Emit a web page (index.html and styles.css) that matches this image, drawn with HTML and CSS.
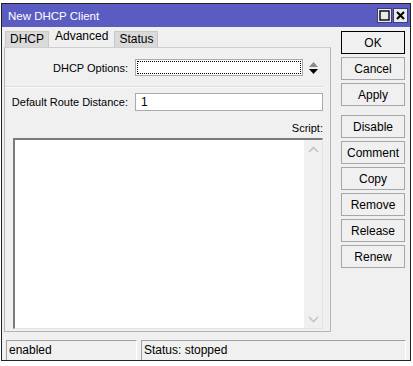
FILE: index.html
```html
<!DOCTYPE html>
<html lang="en">
<head>
    <meta charset="UTF-8">
    <title>New DHCP Client</title>
    <link rel="stylesheet" href="styles.css">
</head>
<body>
    <div class="window">
        <div class="titlebar">
            <span class="title">New DHCP Client</span>
            <div class="title-buttons">
                <span class="tbtn">
                    <svg width="11" height="11" viewBox="0 0 11 11"><rect x="1" y="1" width="9" height="9" fill="none" stroke="#000" stroke-width="1.4"/></svg>
                </span>
                <span class="tbtn">
                    <svg width="11" height="11" viewBox="0 0 11 11"><path d="M2 2 L9 9 M9 2 L2 9" stroke="#000" stroke-width="2"/></svg>
                </span>
            </div>
        </div>

        <div class="main">
            <div class="left">
                <div class="tabs">
                    <div class="tab">DHCP</div>
                    <div class="tab active">Advanced</div>
                    <div class="tab">Status</div>
                </div>
                <div class="panel">
                    <div class="row row-options">
                        <label class="label">DHCP Options:</label>
                        <div class="select"><div class="focus"></div></div>
                        <svg class="updown" width="11" height="16" viewBox="0 0 11 16">
                            <path d="M5.5 2 L10 7 L1 7 Z" fill="#8a8a8a"/>
                            <path d="M1 9 L10 9 L5.5 14 Z" fill="#000"/>
                        </svg>
                    </div>
                    <div class="separator"></div>
                    <div class="row row-distance">
                        <label class="label">Default Route Distance:</label>
                        <div class="input">1</div>
                    </div>
                    <div class="script-label">Script:</div>
                    <div class="textarea">
                        <div class="vscroll">
                            <svg width="11" height="7" viewBox="0 0 11 7"><path d="M1 6 L5.5 1.5 L10 6" fill="none" stroke="#c4c4c4" stroke-width="1.6"/></svg>
                            <svg width="11" height="7" viewBox="0 0 11 7"><path d="M1 1 L5.5 5.5 L10 1" fill="none" stroke="#c4c4c4" stroke-width="1.6"/></svg>
                        </div>
                    </div>
                </div>
            </div>

            <div class="buttons">
                <button class="btn default">OK</button>
                <button class="btn">Cancel</button>
                <button class="btn">Apply</button>
                <button class="btn spaced">Disable</button>
                <button class="btn">Comment</button>
                <button class="btn">Copy</button>
                <button class="btn">Remove</button>
                <button class="btn">Release</button>
                <button class="btn">Renew</button>
            </div>
        </div>

        <div class="statusbar">
            <div class="cell cell-state">enabled</div>
            <div class="cell cell-status">Status: stopped</div>
        </div>
    </div>
</body>
</html>
```

FILE: styles.css
```css
* {
    box-sizing: border-box;
}
body, html {
    margin: 0;
    padding: 0;
    background-color: #fff;
    font-family: 'Liberation Sans', Arial, sans-serif;
    font-size: 12px;
    color: #000;
}
.window {
    width: 410px;
    height: 358px;
    margin: 3px 0 0 1px;
    border: 1px solid #222;
    background-color: #f0f0f0;
    display: flex;
    flex-direction: column;
}
.titlebar {
    flex-shrink: 0;
    height: 23px;
    background-color: #5a5cc2;
    color: #fff;
    display: flex;
    align-items: center;
    justify-content: space-between;
    padding: 0 2px 0 6px;
}
.title {
    font-size: 11.5px;
}
.title-buttons {
    display: flex;
    gap: 1px;
}
.tbtn {
    width: 15px;
    height: 15px;
    background-color: #eaeaea;
    border: 1px solid #3d3d7a;
    display: flex;
    align-items: center;
    justify-content: center;
}
.main {
    flex-shrink: 0;
    height: 305px;
    display: flex;
    padding: 2px 5px 0 2px;
}
.left {
    width: 327px;
    display: flex;
    flex-direction: column;
}
.tabs {
    display: flex;
    height: 18px;
    align-items: flex-end;
    padding-left: 1px;
}
.tab {
    height: 16px;
    line-height: 15px;
    padding: 0 4px;
    background-color: #dadada;
    border: 1px solid #c8c8c8;
    border-bottom: none;
}
.tab.active {
    height: 18px;
    line-height: 13px;
    background-color: #f0f0f0;
    border-color: #f0f0f0;
    padding: 0 5px;
}
.panel {
    height: 285px;
    border: 1px solid #b4b4b4;
    border-top-color: #cfcfcf;
    display: flex;
    flex-direction: column;
    padding: 0 7px 0 0;
}
.row {
    display: flex;
    align-items: center;
}
.row-options {
    margin-top: 11px;
    height: 17px;
}
.label {
    width: 130px;
    flex-shrink: 0;
    text-align: right;
    padding-right: 7px;
    white-space: nowrap;
    font-size: 11px;
}
.select {
    width: 168px;
    height: 17px;
    background-color: #fff;
    border: 1px solid #a9a9a9;
    padding: 1px;
}
.focus {
    height: 100%;
    border: 1px dotted #000;
}
.updown {
    margin-left: 5px;
}
.separator {
    margin-top: 10px;
    height: 2px;
    border-top: 1px solid #dddddd;
    border-bottom: 1px solid #fafafa;
}
.row-distance {
    margin-top: 5px;
    height: 18px;
}
.input {
    flex: 1;
    height: 18px;
    line-height: 16px;
    background-color: #fff;
    border: 1px solid #a9a9a9;
    padding-left: 5px;
}
.script-label {
    margin-top: 10px;
    text-align: right;
    height: 14px;
    line-height: 14px;
    font-size: 11px;
}
.textarea {
    margin: 3px 0 0 8px;
    height: 191px;
    background-color: #fff;
    border: 1px solid #e4e4e4;
    border-top: 2px solid #7a7a7a;
    border-left: 2px solid #7a7a7a;
    display: flex;
    justify-content: flex-end;
}
.vscroll {
    width: 18px;
    background-color: #f0f0f0;
    display: flex;
    flex-direction: column;
    justify-content: space-between;
    align-items: center;
    padding: 6px 0 5px;
}
.buttons {
    margin-left: 10px;
    width: 64px;
    display: flex;
    flex-direction: column;
    gap: 3px;
    padding-top: 2px;
}
.btn {
    height: 23px;
    flex-shrink: 0;
    padding: 0;
    background-color: #f0f0f0;
    border: 1px solid #a6a6a6;
    font-family: 'Liberation Sans', Arial, sans-serif;
    font-size: 12px;
    color: #000;
}
.btn.default {
    border: 1px solid #000;
}
.btn.spaced {
    margin-top: 6px;
}
.statusbar {
    flex-shrink: 0;
    display: flex;
    gap: 4px;
    padding: 8px 4px 0 4px;
    height: 28px;
}
.cell {
    height: 20px;
    line-height: 19px;
    border-top: 1px solid #a0a0a0;
    border-left: 1px solid #a0a0a0;
    border-right: 1px solid #fff;
    padding-left: 2px;
}
.cell-state {
    width: 131px;
}
.cell-status {
    flex: 1;
}
```
